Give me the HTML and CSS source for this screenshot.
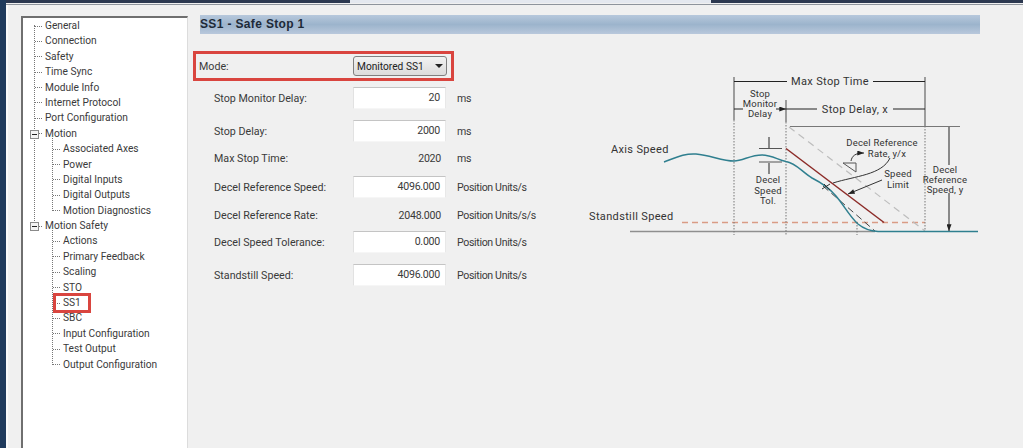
FILE: index.html
```html
<!DOCTYPE html>
<html lang="en">
<head>
<meta charset="utf-8">
<title>SS1 - Safe Stop 1</title>
<link rel="stylesheet" href="styles.css">
</head>
<body>
<div class="topbar"><span class="seg-a"></span><span class="seg-b"></span><span class="seg-c"></span></div>
<div class="window">
  <div class="edge"></div>
  <div class="gutter"></div>
  <nav class="tree">
    <div class="root">
      <div class="row">General</div>
      <div class="row">Connection</div>
      <div class="row">Safety</div>
      <div class="row">Time Sync</div>
      <div class="row">Module Info</div>
      <div class="row">Internet Protocol</div>
      <div class="row">Port Configuration</div>
      <div class="row branch"><span class="box"></span>Motion</div>
      <div class="children">
        <div class="row">Associated Axes</div>
        <div class="row">Power</div>
        <div class="row">Digital Inputs</div>
        <div class="row">Digital Outputs</div>
        <div class="row">Motion Diagnostics</div>
      </div>
      <div class="row branch"><span class="box"></span>Motion Safety</div>
    </div>
    <div class="children last">
      <div class="row">Actions</div>
      <div class="row">Primary Feedback</div>
      <div class="row">Scaling</div>
      <div class="row">STO</div>
      <div class="row marked">SS1</div>
      <div class="row">SBC</div>
      <div class="row">Input Configuration</div>
      <div class="row">Test Output</div>
      <div class="row">Output Configuration</div>
    </div>
  </nav>
  <main class="panel">
    <h1 class="title">SS1 - Safe Stop 1</h1>
    <div class="content">
      <div class="form">
        <div class="mode">
          <span class="mode-label">Mode:</span>
          <div class="select"><span>Monitored SS1</span><i class="caret"></i></div>
        </div>
        <div class="grid">
          <span class="label">Stop Monitor Delay:</span><span class="input">20</span><span class="unit">ms</span>
          <span class="label">Stop Delay:</span><span class="input">2000</span><span class="unit">ms</span>
          <span class="label">Max Stop Time:</span><span class="value">2020</span><span class="unit">ms</span>
          <span class="label">Decel Reference Speed:</span><span class="input">4096.000</span><span class="unit">Position Units/s</span>
          <span class="label">Decel Reference Rate:</span><span class="value">2048.000</span><span class="unit">Position Units/s/s</span>
          <span class="label">Decel Speed Tolerance:</span><span class="input">0.000</span><span class="unit">Position Units/s</span>
          <span class="label">Standstill Speed:</span><span class="input">4096.000</span><span class="unit">Position Units/s</span>
        </div>
      </div>
      <svg class="diagram" width="410" height="180" viewBox="580 65 410 180" xmlns="http://www.w3.org/2000/svg">
        <defs>
          <marker id="ah" viewBox="0 0 8 6" refX="8" refY="3" markerWidth="7" markerHeight="5" orient="auto-start-reverse"><path d="M0 0L8 3L0 6Z" fill="#222"/></marker>
        </defs>
        <g fill="none">
          <path d="M630 231.5H875" stroke="#8f8f8f" stroke-width="1.4"/>
          <path d="M682 222.5H925" stroke="#d99b85" stroke-width="1.3" stroke-dasharray="6 4"/>
          <path d="M734 77V120M786 100V122M925 77V126" stroke="#666" stroke-width="1.2"/>
          <path d="M734 120V235M786 122V235M925 126V232M857 222V235" stroke="#777" stroke-width="1" stroke-dasharray="1.5 1.5"/>
          <path d="M790 126.500H960" stroke="#777" stroke-width="1"/>
          <path d="M789 127L925 231" stroke="#bdbdbd" stroke-width="1.2" stroke-dasharray="7 5"/>
          <path d="M786 148.500L884 222.500" stroke="#8c2b27" stroke-width="1.5"/>
          <path d="M823 186L875 231" stroke="#444" stroke-width="1" stroke-dasharray="7 4"/>
          <path d="M664 162C675 158 685 153 696 154C710 155 722 161 734 161C743 161 750 155 762 155C772 155 778 160 786 161.500C796 163 802 172 812 178C822 183 830 189 836 196C843 204 850 217 858 224C864 229 870 231 878 231.500H978" stroke="#2f7f8f" stroke-width="1.500"/>
          <path d="M787 81.500H734M873 81.500H925M817 109H786M893 109H925M743 109H734M776 109H786" stroke="#222" stroke-width="1" marker-end="url(#ah)"/>
          <path d="M759 148.500H782M759 162H782" stroke="#555" stroke-width="1"/>
          <path d="M769 137V148M769 174V163M949 165V127M949 193V231" stroke="#222" stroke-width="1" marker-end="url(#ah)"/>
          <path d="M843 163H856V172Z" stroke="#555" stroke-width="1"/>
          <path d="M851 161C852 156 855 153 864 153" stroke="#333" stroke-width="1" marker-end="url(#ah)"/>
          <path d="M833 183C855 176 882 175 890 158" stroke="#333" stroke-width="1"/>
          <path d="M882 180L848 194" stroke="#333" stroke-width="1" marker-end="url(#ah)"/>
          <path d="M824 184L830 190M822 189L830 184" stroke="#333" stroke-width="1"/>
        </g>
        <g class="dtext">
          <text x="611" y="153">Axis Speed</text>
          <text x="589" y="220">Standstill Speed</text>
          <text class="mid" x="830" y="85">Max Stop Time</text>
          <text class="mid" x="855" y="113">Stop Delay, x</text>
        </g>
        <g class="stext">
          <text x="760" y="97">Stop</text>
          <text x="760" y="107">Monitor</text>
          <text x="760" y="117">Delay</text>
          <text x="768" y="183">Decel</text>
          <text x="768" y="194">Speed</text>
          <text x="768" y="204">Tol.</text>
          <text x="882" y="146">Decel Reference</text>
          <text x="887" y="157">Rate, y/x</text>
          <text x="898" y="177">Speed</text>
          <text x="898" y="188">Limit</text>
          <text x="945" y="173">Decel</text>
          <text x="945" y="183">Reference</text>
          <text x="945" y="193">Speed, y</text>
        </g>
      </svg>
    </div>
  </main>
</div>
</body>
</html>
```
FILE: styles.css
```css
* { box-sizing: border-box; }
html, body { margin: 0; height: 448px; overflow: hidden; }
body {
  background: #f0f0f0;
  font-family: Roboto, "Liberation Sans", Arial, sans-serif;
  font-size: 10.7px;
  color: #3a3a3a;
}
.topbar { display: flex; height: 5px; border-bottom: 1px solid #8e949c; }
.topbar span { display: block; height: 2.5px; }
.seg-a { width: 350px; background: #2c3850; }
.seg-b { width: 361px; background: #e4e8ef; }
.seg-c { flex: 1; background: #2c3850; }
.window { display: flex; height: 443px; }
.edge { width: 6px; background: #1f3a5c; margin-top: -5px; }
.gutter { width: 15px; border-left: 2px solid #fafafa; }
.tree {
  width: 167px;
  margin-top: 11px;
  font-size: 10.2px;
  background: #fff;
  border-left: 2px solid #6f6f6f;
  border-top: 2px solid #6f6f6f;
  border-right: 1px solid #dcdcdc;
  position: relative;
}
.root { position: relative; }
.root::before {
  content: "";
  position: absolute;
  left: 11px; top: 7px; bottom: 8px;
  border-left: 1px dotted #777;
}
.row {
  position: relative;
  height: 15.4px;
  line-height: 15.4px;
  padding-left: 22px;
  white-space: nowrap;
}
.row::before {
  content: "";
  position: absolute;
  left: 12px; top: 7.5px;
  width: 7px;
  border-top: 1px dotted #777;
}
.branch::before { left: 16px; width: 3px; }
.box {
  position: absolute;
  left: 7px; top: 4px;
  width: 9px; height: 9px;
  background: #f4f4f4;
  border: 1px solid #8a8a8a;
  z-index: 1;
}
.box::after {
  content: "";
  position: absolute;
  left: 1px; top: 3px;
  width: 5px;
  border-top: 1px solid #222;
}
.children { position: relative; }
.children::before {
  content: "";
  position: absolute;
  left: 29px; top: -6px; bottom: 7px;
  border-left: 1px dotted #777;
}
.children .row { padding-left: 40px; }
.children .row::before { left: 30px; }
.marked::after {
  content: "";
  position: absolute;
  left: 30px; top: -2px;
  width: 32px; height: 14px;
  border: 3px solid #d9453f;
}
.panel { flex: 1; min-width: 0; }
.title {
  margin: 10px 0 0 12px;
  width: 780px;
  height: 19px;
  font-family: "Liberation Sans", Arial, sans-serif;
  font-size: 12px;
  line-height: 19px;
  font-weight: 700;
  letter-spacing: 0.35px;
  color: #1d2a38;
  background: linear-gradient(#b7c8dc, #9cb4cc 50%, #b9c8dc);
}
.content { display: flex; margin-top: 17px; padding-left: 5px; }
.form { width: 387px; flex: none; }
.mode {
  display: flex;
  align-items: center;
  justify-content: space-between;
  width: 261px;
  height: 30px;
  padding: 0 4px 0 3px;
  border: 3px solid #d9453f;
}
.select {
  display: flex;
  align-items: center;
  justify-content: space-between;
  width: 94px;
  height: 20px;
  padding: 0 3px 0 3px;
  font-size: 10.2px;
  color: #222;
  white-space: nowrap;
  border: 1px solid #808080;
  border-radius: 3px;
  background: linear-gradient(#f2f2f2, #dcdcdc);
}
.caret {
  width: 0; height: 0;
  border-left: 4px solid transparent;
  border-right: 4px solid transparent;
  border-top: 4px solid #222;
}
.grid {
  display: grid;
  grid-template-columns: 160px 93px auto;
  grid-template-rows: 34px 32px 22px 36px 20px 34px 32px;
  align-items: center;
}
.label { padding-left: 21px; }
.input {
  height: 22px;
  line-height: 19px;
  padding-right: 5px;
  font-size: 10.6px;
  letter-spacing: -0.25px;
  text-align: right;
  background: #fff;
  border-top: 1px solid #c4c4c4;
  border-left: 1px solid #e2e2e2;
  border-right: 1px solid #e8e8e8;
  border-bottom: 1px solid #f6f6f6;
}
.value { text-align: right; padding-right: 5px; font-size: 10.6px; letter-spacing: -0.25px; }
.unit { padding-left: 11px; font-size: 10.6px; letter-spacing: -0.35px; }
.diagram { display: block; flex: none; margin-top: 14px; }
.dtext text { font-size: 11px; fill: #333; letter-spacing: 0.35px; }
.stext text { font-size: 9.5px; fill: #333; text-anchor: middle; letter-spacing: 0.2px; }
.dtext .mid { text-anchor: middle; }
```
